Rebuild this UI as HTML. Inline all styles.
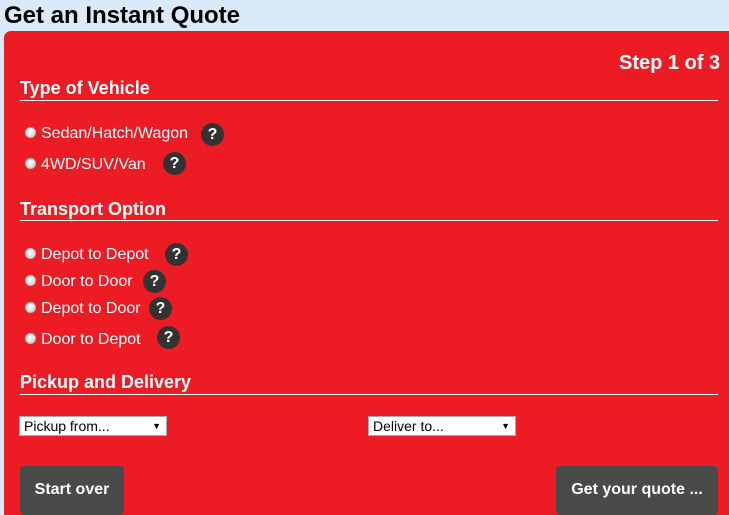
<!DOCTYPE html>
<html><head><style>
*{margin:0;padding:0;box-sizing:border-box}
html,body{width:729px;height:515px;overflow:hidden}
body{background:#d9eafa;font-family:"Liberation Sans",Arial,sans-serif;position:relative}
.a{position:absolute;white-space:nowrap}
h1{position:absolute;left:4px;top:2px;font-size:24px;font-weight:bold;color:#000}
.panel{position:absolute;left:4px;top:31px;width:740px;height:484px;background:#ec1b24;border-radius:7px 7px 0 0}
.hd{font-size:18px;font-weight:bold;color:#fff}
.ln{position:absolute;left:20px;width:698px;height:1px;background:#fff}
.r{width:11px;height:11px;border-radius:50%;background:radial-gradient(circle at 40% 35%,#fff,#ccc);border:1px solid #bbb;display:inline-block}
.o{font-size:16px;color:#fff}
.q{position:absolute;width:23px;height:23px;border-radius:50%;background:#333;color:#fff;font-weight:bold;font-size:16px;text-align:center;line-height:23px}
.sel{position:absolute;height:20px;background:#fff;border:1px solid #aaa;font-size:14px;color:#000;padding-left:4px;line-height:18px}
.sel:after{content:"\25BC";position:absolute;right:5px;top:0;font-size:9px}
.btn{position:absolute;background:#4a4a4a;border-radius:4px;color:#fff;font-weight:bold;font-size:16px;text-align:center}
</style></head><body>
<h1>Get an Instant Quote</h1>
<div class="panel"></div>
<div class="a hd" style="left:619px;top:52px;font-size:20px">Step 1 of 3</div>
<div class="a hd" style="left:20px;top:78px">Type of Vehicle</div>
<div class="ln" style="top:100px"></div>
<div class="a r" style="left:25px;top:127px"></div><div class="a o" style="left:41px;top:125px">Sedan/Hatch/Wagon</div><div class="q" style="left:201px;top:123px">?</div>
<div class="a r" style="left:25px;top:158px"></div><div class="a o" style="left:41px;top:156px">4WD/SUV/Van</div><div class="q" style="left:163px;top:152px">?</div>
<div class="a hd" style="left:20px;top:199px">Transport Option</div>
<div class="ln" style="top:220px"></div>
<div class="a r" style="left:25px;top:248px"></div><div class="a o" style="left:41px;top:246px">Depot to Depot</div><div class="q" style="left:165px;top:243px">?</div>
<div class="a r" style="left:25px;top:275px"></div><div class="a o" style="left:41px;top:273px">Door to Door</div><div class="q" style="left:143px;top:270px">?</div>
<div class="a r" style="left:25px;top:302px"></div><div class="a o" style="left:41px;top:300px">Depot to Door</div><div class="q" style="left:149px;top:297px">?</div>
<div class="a r" style="left:25px;top:333px"></div><div class="a o" style="left:41px;top:331px">Door to Depot</div><div class="q" style="left:157px;top:326px">?</div>
<div class="a hd" style="left:20px;top:372px">Pickup and Delivery</div>
<div class="ln" style="top:394px"></div>
<div class="sel" style="left:19px;top:416px;width:148px">Pickup from...</div>
<div class="sel" style="left:368px;top:416px;width:148px">Deliver to...</div>
<div class="btn" style="left:20px;top:466px;width:104px;height:49px;line-height:47px">Start over</div>
<div class="btn" style="left:556px;top:466px;width:162px;height:49px;line-height:47px">Get your quote ...</div>
</body></html>
